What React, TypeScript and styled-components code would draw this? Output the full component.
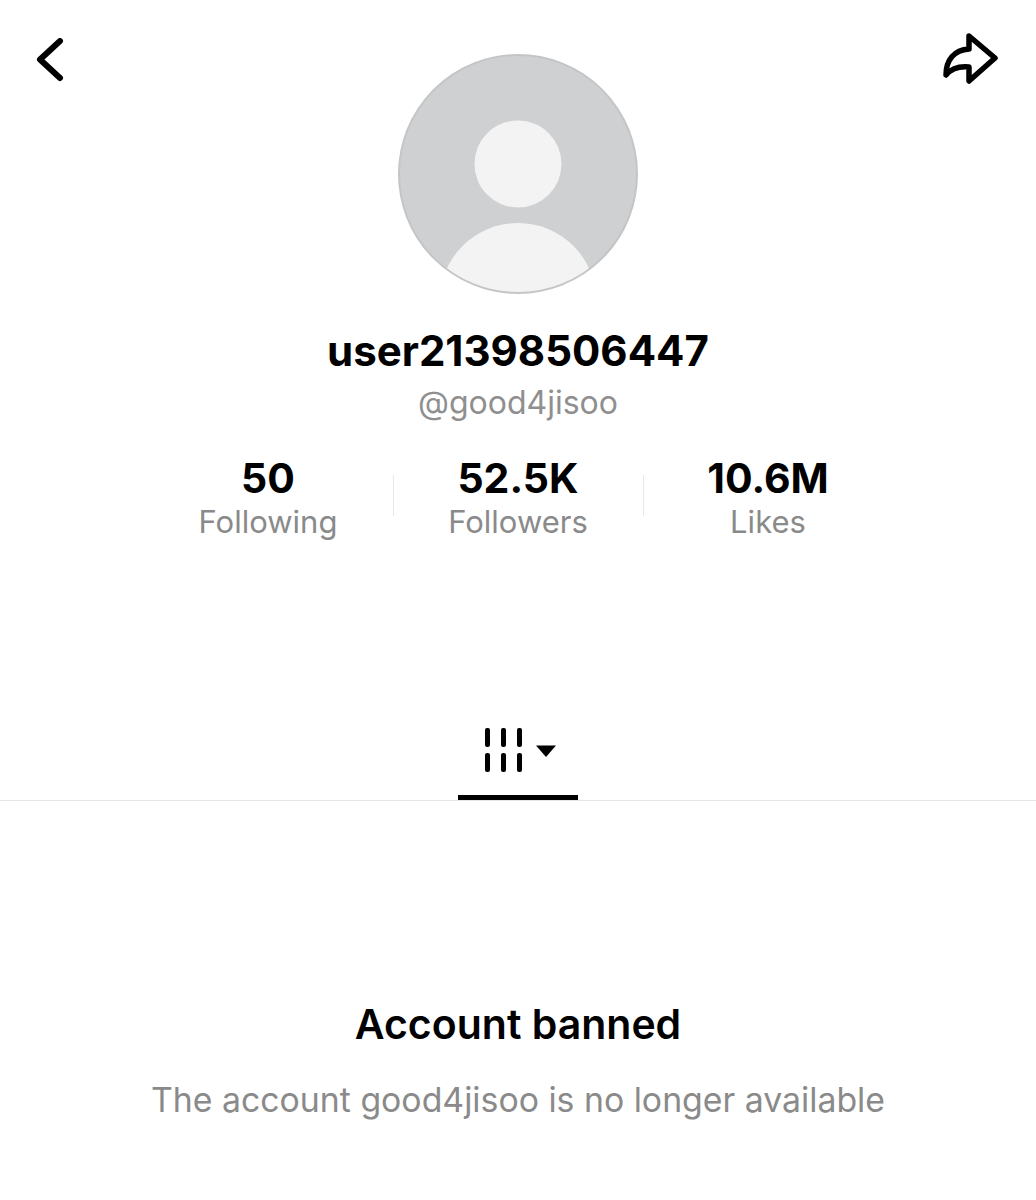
import styled, { createGlobalStyle } from "styled-components";

const GlobalStyle = createGlobalStyle`
    html, body {
        margin: 0;
        padding: 0;
        background: #fff;
        font-family: Inter, "Liberation Sans", sans-serif;
    }
`;

const stats = [
    { value: "50", label: "Following" },
    { value: "52.5K", label: "Followers" },
    { value: "10.6M", label: "Likes" },
];

const App = () => {
    return (
        <Page>
            <GlobalStyle />
            <TopRow>
                <IconButton>
                    <svg width="32" height="44" viewBox="0 0 32 44" fill="none">
                        <path d="M24 3 L4 21.5 L24 40" stroke="#000" strokeWidth="6" strokeLinecap="round" strokeLinejoin="round" />
                    </svg>
                </IconButton>
                <Avatar>
                    <svg width="240" height="240" viewBox="0 0 240 240">
                        <defs>
                            <clipPath id="avatarClip">
                                <circle cx="120" cy="120" r="119" />
                            </clipPath>
                        </defs>
                        <circle cx="120" cy="120" r="119" fill="#cfd0d1" />
                        <circle cx="120" cy="110" r="43.5" fill="#f3f3f3" />
                        <circle cx="120" cy="247.5" r="78.5" fill="#f3f3f3" clipPath="url(#avatarClip)" />
                        <circle cx="120" cy="120" r="119" fill="none" stroke="#c4c5c6" strokeWidth="2" />
                    </svg>
                </Avatar>
                <IconButton>
                    <svg width="58" height="52" viewBox="0 0 58 52" fill="none">
                        <path
                            d="M27 4 L53 26 L27 49 L27 35 C16 34 9 37 4 43 C4 28 12 18 27 17 Z"
                            stroke="#000"
                            strokeWidth="5.5"
                            strokeLinejoin="round"
                            strokeLinecap="round"
                        />
                    </svg>
                </IconButton>
            </TopRow>
            <Username>user21398506447</Username>
            <Handle>@good4jisoo</Handle>
            <StatsRow>
                {stats.map((stat, i) => (
                    <Stat key={stat.label} divided={i > 0}>
                        <StatValue>{stat.value}</StatValue>
                        <StatLabel>{stat.label}</StatLabel>
                    </Stat>
                ))}
            </StatsRow>
            <TabBar>
                <Tab>
                    <svg width="74" height="46" viewBox="0 0 74 46">
                        <g fill="#000">
                            <rect x="1" y="0" width="5" height="19" rx="2" />
                            <rect x="17" y="0" width="5" height="19" rx="2" />
                            <rect x="33" y="0" width="5" height="19" rx="2" />
                            <rect x="1" y="25" width="5" height="19" rx="2" />
                            <rect x="17" y="25" width="5" height="19" rx="2" />
                            <rect x="33" y="25" width="5" height="19" rx="2" />
                            <path d="M52 17.5 H72 L62 29 Z" />
                        </g>
                    </svg>
                </Tab>
            </TabBar>
            <Notice>
                <NoticeTitle>Account banned</NoticeTitle>
                <NoticeText>The account good4jisoo is no longer available</NoticeText>
            </Notice>
        </Page>
    );
};

const Page = styled.div`
    width: 1036px;
    height: 1200px;
    overflow: hidden;
    background: #fff;
    display: flex;
    flex-direction: column;
    align-items: center;
`;
const TopRow = styled.div`
    width: 100%;
    box-sizing: border-box;
    display: flex;
    justify-content: space-between;
    align-items: flex-start;
    padding: 54px 36px 0 36px;
`;
const IconButton = styled.div`
    display: flex;
    width: 60px;
    margin-top: -16px;
    &:last-child {
        justify-content: flex-end;
        margin-top: -22px;
    }
`;
const Avatar = styled.div`
    width: 240px;
    height: 240px;
    svg {
        display: block;
    }
`;
const Username = styled.div`
    margin-top: 30px;
    font-size: 42px;
    line-height: 54px;
    font-weight: 700;
    color: #000;
`;
const Handle = styled.div`
    margin-top: 5px;
    font-size: 32px;
    line-height: 40px;
    color: #8f8f8f;
`;
const StatsRow = styled.div`
    margin-top: 31px;
    display: grid;
    grid-template-columns: repeat(3, 250px);
`;
const Stat = styled.div<{ divided: boolean }>`
    position: relative;
    display: flex;
    flex-direction: column;
    align-items: center;
    &::before {
        content: "";
        display: ${({ divided }) => (divided ? "block" : "none")};
        position: absolute;
        left: 0;
        top: 21px;
        width: 1px;
        height: 41px;
        background: #e8e8e8;
    }
`;
const StatValue = styled.div`
    font-size: 41px;
    line-height: 49px;
    font-weight: 700;
    color: #000;
`;
const StatLabel = styled.div`
    font-size: 31px;
    line-height: 38px;
    color: #8a8a8a;
`;
const TabBar = styled.div`
    width: 100%;
    margin-top: 187px;
    height: 72px;
    border-bottom: 1px solid #e6e6e6;
    display: flex;
    justify-content: center;
`;
const Tab = styled.div`
    width: 120px;
    height: 72px;
    box-sizing: border-box;
    border-bottom: 5px solid #000;
    display: flex;
    justify-content: center;
    svg {
        display: block;
        margin-left: 6px;
    }
`;
const Notice = styled.div`
    margin-top: 197px;
    display: flex;
    flex-direction: column;
    align-items: center;
`;
const NoticeTitle = styled.div`
    font-size: 41px;
    line-height: 52px;
    font-weight: 600;
    color: #000;
`;
const NoticeText = styled.div`
    margin-top: 30px;
    font-size: 33.8px;
    line-height: 40px;
    color: #8a8a8a;
`;

export default App;
